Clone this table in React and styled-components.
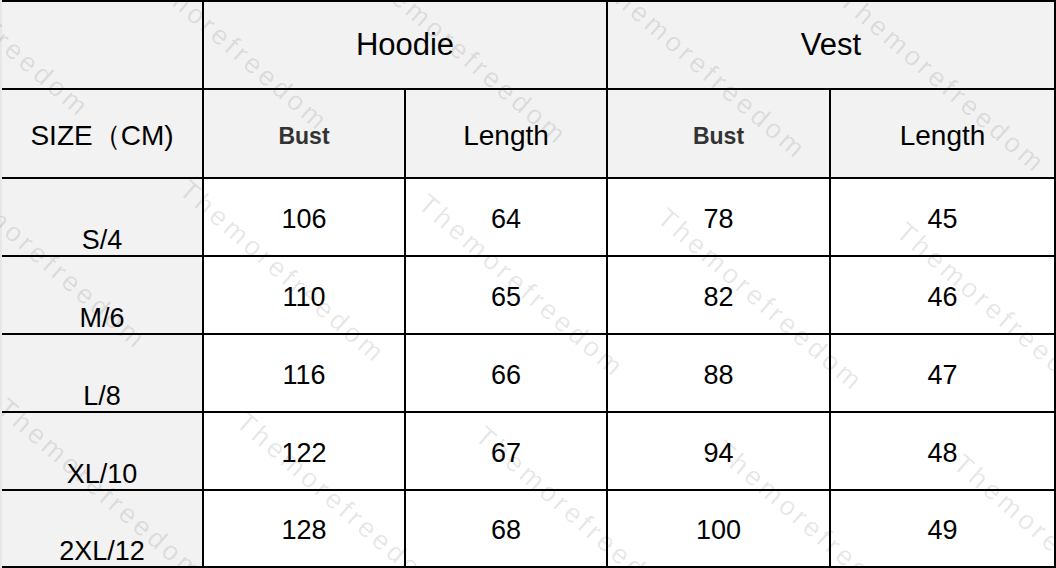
import React from "react";
import styled, { createGlobalStyle } from "styled-components";

const sizes = [
  { label: "S/4", hoodie: [106, 64], vest: [78, 45] },
  { label: "M/6", hoodie: [110, 65], vest: [82, 46] },
  { label: "L/8", hoodie: [116, 66], vest: [88, 47] },
  { label: "XL/10", hoodie: [122, 67], vest: [94, 48] },
  { label: "2XL/12", hoodie: [128, 68], vest: [100, 49] },
];

// watermark lattice, measured off the picture
const marks = [];
for (let j = -1; j <= 2; j++) {
  for (let i = -2; i <= 4; i++) {
    marks.push({ x: 192 + 239 * i + 57 * j, y: 176 + 14 * i + 232 * j });
  }
}

const App = () => {
  return (
    <>
      <GlobalStyle />
      <Page>
        <Sheet>
          <Cell $grey />
          <Cell $grey $span={2}>
            <Title>Hoodie</Title>
          </Cell>
          <Cell $grey $span={2}>
            <Title>Vest</Title>
          </Cell>

          <Cell $grey $shift={4}>
            <Label>SIZE（CM)</Label>
          </Cell>
          <Cell $grey $shift={4}>
            <Measure>Bust</Measure>
          </Cell>
          <Cell $grey $shift={4}>
            <Label>Length</Label>
          </Cell>
          <Cell $grey $shift={4}>
            <Measure>Bust</Measure>
          </Cell>
          <Cell $grey $shift={4}>
            <Label>Length</Label>
          </Cell>

          {sizes.map((row) => (
            <React.Fragment key={row.label}>
              <Cell $grey $bottom>
                <Value>{row.label}</Value>
              </Cell>
              {[...row.hoodie, ...row.vest].map((v, k) => (
                <Cell key={k} $shift={3}>
                  <Value>{v}</Value>
                </Cell>
              ))}
            </React.Fragment>
          ))}
        </Sheet>
        <Watermarks>
          {marks.map((m, k) => (
            <Mark key={k} style={{ left: m.x, top: m.y }}>
              Themorefreedom
            </Mark>
          ))}
        </Watermarks>
      </Page>
    </>
  );
};

export default App;

const GlobalStyle = createGlobalStyle`
  html, body {
    margin: 0;
    padding: 0;
    background: #e6e6eb;
  }
  body {
    font-family: "Liberation Sans", Arial, sans-serif;
  }
`;

const Page = styled.div`
  position: relative;
  width: 1056px;
  height: 568px;
  overflow: hidden;
  padding-left: 2px;
  box-sizing: border-box;
`;

const Sheet = styled.div`
  display: grid;
  grid-template-columns: 200px 200px 200px 221px 223px;
  grid-template-rows: 86px 87px repeat(4, 76px) 75px;
  gap: 2px;
  padding: 2px 2px 2px 0;
  background: #000;
  width: 1054px;
  box-sizing: border-box;
`;

const Cell = styled.div`
  grid-column: span ${(p) => p.$span || 1};
  background: ${(p) => (p.$grey ? "#f2f2f2" : "#ffffff")};
  display: flex;
  justify-content: center;
  align-items: ${(p) => (p.$bottom ? "flex-end" : "center")};
  padding-top: ${(p) => p.$shift || 0}px;
  box-sizing: border-box;
  color: #000;
`;

const Title = styled.span`
  font-size: 31px;
  line-height: 34px;
`;

const Label = styled.span`
  font-size: 28px;
  line-height: 32px;
`;

const Measure = styled.span`
  font-size: 23px;
  font-weight: 700;
  color: #333;
  line-height: 28px;
`;

const Value = styled.span`
  font-size: 27px;
  line-height: 30px;
`;

const Watermarks = styled.div`
  position: absolute;
  inset: 0;
  pointer-events: none;
  overflow: hidden;
`;

const Mark = styled.span`
  position: absolute;
  transform-origin: left top;
  transform: rotate(41deg);
  white-space: nowrap;
  font-family: "Liberation Sans", Arial, sans-serif;
  font-size: 27px;
  line-height: 27px;
  letter-spacing: 4px;
  color: rgba(0, 0, 0, 0.1);
`;
